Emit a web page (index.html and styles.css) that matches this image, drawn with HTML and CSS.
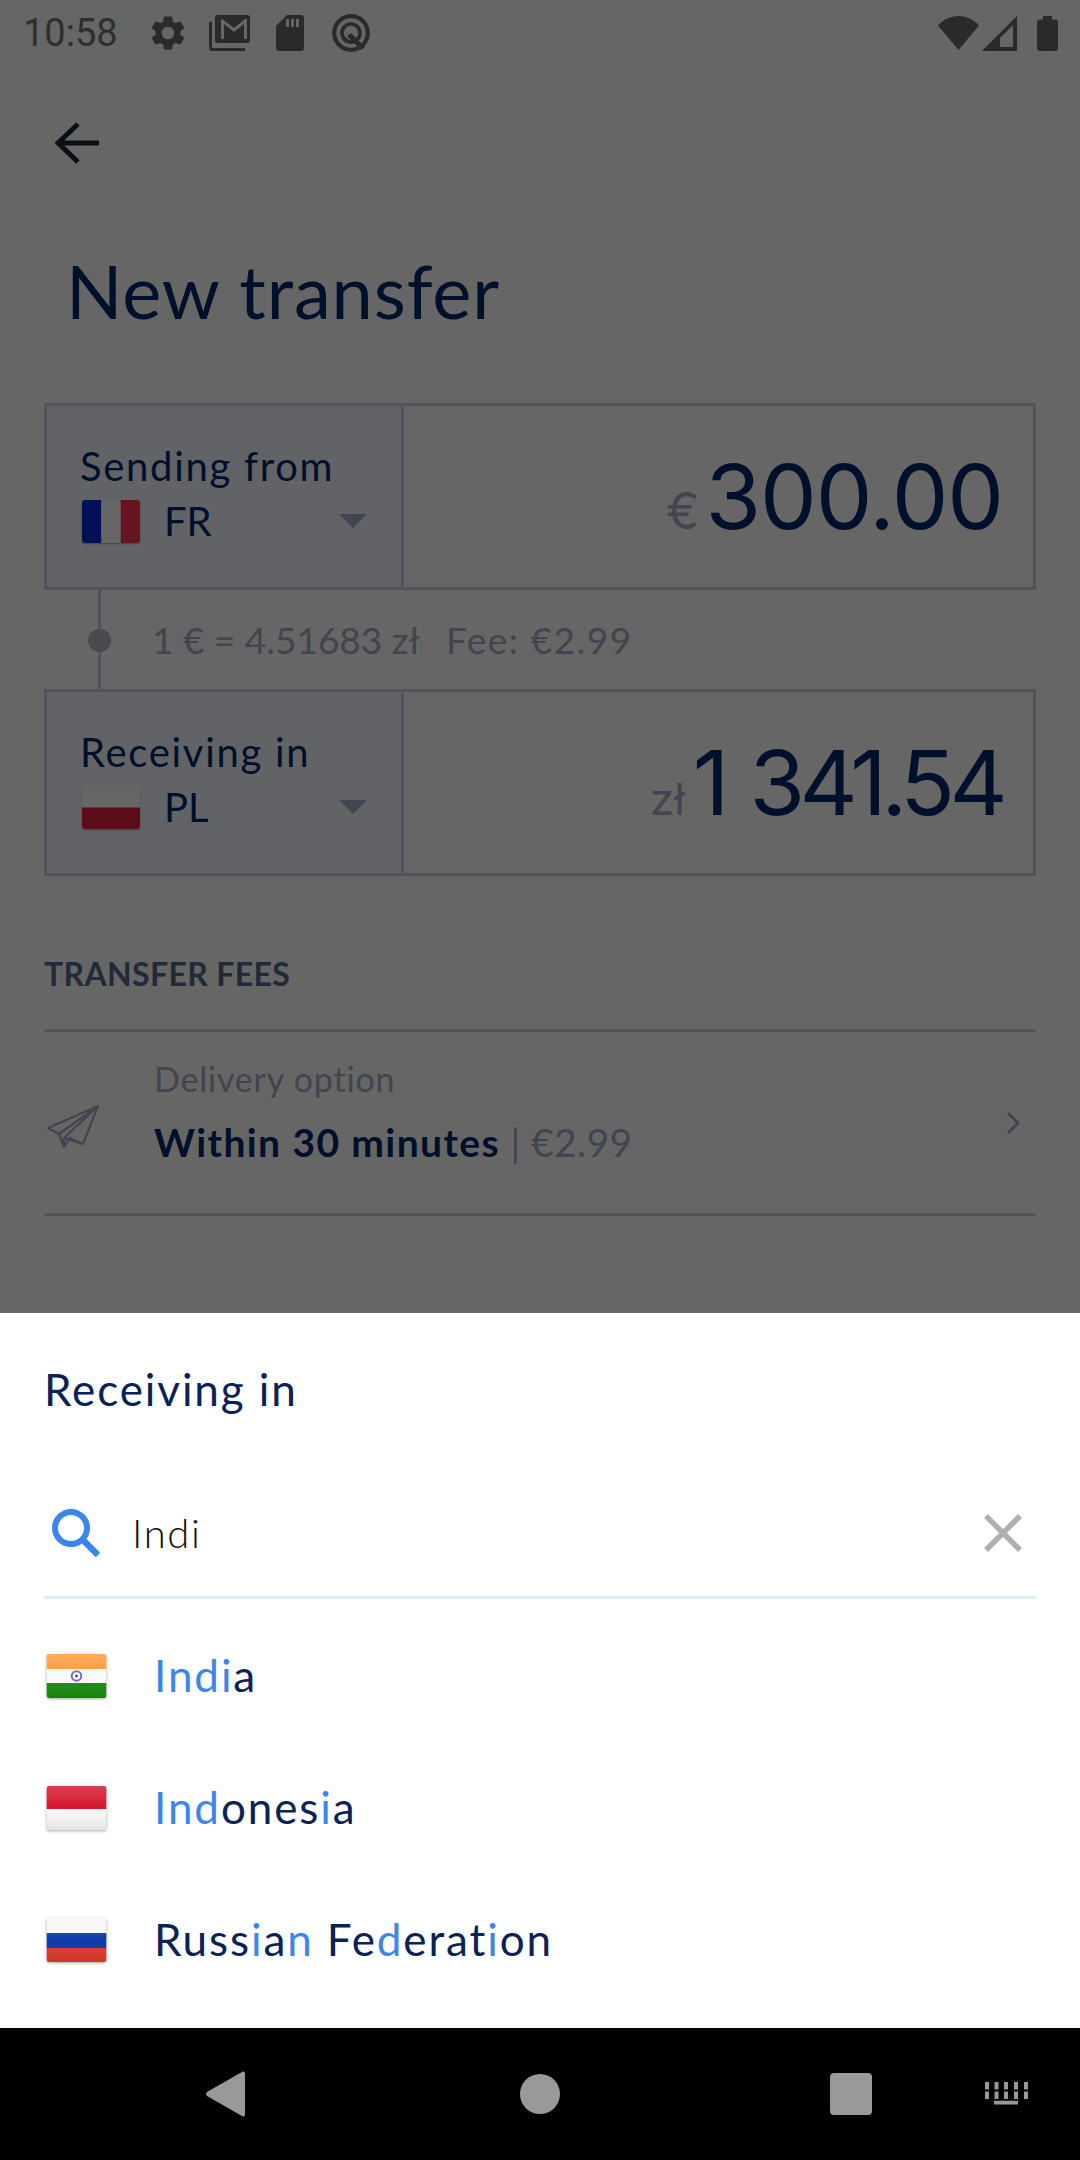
FILE: index.html
```html
<!DOCTYPE html>
<html lang="en">
<head>
    <meta charset="UTF-8">
    <meta name="viewport" content="width=device-width, initial-scale=1.0">
    <title>New transfer</title>
    <link rel="stylesheet" href="styles.css">
</head>
<body>
<div class="screen">
    <div class="page">
        <!-- Status bar -->
        <div class="status">
            <span class="time">10:58</span>
            <svg class="st-gear" viewBox="2.4 1.6 19.2 20.8"><path d="M19.14 12.94c.04-.3.06-.61.06-.94 0-.32-.02-.64-.07-.94l2.03-1.58c.18-.14.23-.41.12-.61l-1.92-3.32c-.12-.22-.37-.29-.59-.22l-2.39.96c-.5-.38-1.03-.7-1.62-.94l-.36-2.54c-.04-.24-.24-.41-.48-.41h-3.84c-.24 0-.43.17-.47.41l-.36 2.54c-.59.24-1.13.57-1.62.94l-2.39-.96c-.22-.08-.47 0-.59.22L2.74 8.87c-.12.21-.08.47.12.61l2.03 1.58c-.05.3-.09.63-.09.94s.02.64.07.94l-2.03 1.58c-.18.14-.23.41-.12.61l1.92 3.32c.12.22.37.29.59.22l2.39-.96c.5.38 1.03.7 1.62.94l.36 2.54c.05.24.24.41.48.41h3.84c.24 0 .44-.17.47-.41l.36-2.54c.59-.24 1.13-.56 1.62-.94l2.39.96c.22.08.47 0 .59-.22l1.92-3.32c.12-.22.07-.47-.12-.61l-2.01-1.58zM12 15.6c-1.98 0-3.6-1.62-3.6-3.6s1.62-3.6 3.6-3.6 3.6 1.62 3.6 3.6-1.62 3.6-3.6 3.6z"/></svg>
            <svg class="st-mail" viewBox="0 0 41 36"><path d="M9 0h29a3 3 0 0 1 3 3v22a3 3 0 0 1-3 3H9a3 3 0 0 1-3-3V3a3 3 0 0 1 3-3zm3 4v20h3V9l10 8 10-8v15h3V4h-2L25 13 13 4z" fill-rule="evenodd"/><path d="M0 7h3v26h33v3H3a3 3 0 0 1-3-3z"/></svg>
            <svg class="st-sd" viewBox="0 0 28 36"><path d="M11 0h14a3 3 0 0 1 3 3v30a3 3 0 0 1-3 3H3a3 3 0 0 1-3-3V11zm4 4v8h3V4zm5 0v8h3V4zM10 4v8h3V4z" fill-rule="evenodd"/></svg>
            <svg class="st-q" viewBox="0 0 38 38"><circle cx="19" cy="19" r="16.8" fill="none" stroke-width="4.2"/><circle cx="19" cy="19" r="9" fill="none" stroke-width="3.6"/><path d="M19 19l14 14-4 3-14-14z"/><path d="M11 21l8 8-8-2z"/></svg>
            <div class="status-right">
                <svg class="st-wifi" viewBox="0 0 41 34"><path d="M0 9.500C5.500 3.500 12.500 0 20.500 0S35.500 3.500 41 9.500L20.500 34z"/></svg>
                <svg class="st-signal" viewBox="0 0 35 35"><path d="M35 0v35H0zM31 9L18 22v9h13z" fill-rule="evenodd"/></svg>
                <svg class="st-battery" viewBox="0 0 21 35"><path d="M6 0h9v3.500h3a3 3 0 0 1 3 3V32a3 3 0 0 1-3 3H3a3 3 0 0 1-3-3V6.500a3 3 0 0 1 3-3h3z"/></svg>
            </div>
        </div>

        <div class="toolbar">
            <svg class="back" viewBox="0 0 44 42"><path d="M44 21H4M23 2L3 21l20 19" fill="none" stroke-width="5"/></svg>
        </div>

        <h1 class="title">New transfer</h1>

        <!-- Sending box -->
        <div class="box">
            <div class="picker">
                <div class="picker-label">Sending from</div>
                <div class="picker-value">
                    <svg class="flag-sm" viewBox="0 0 58 43"><rect width="19.300" height="43" fill="#0a2ad8"/><rect x="19.300" width="19.400" height="43" fill="#fff"/><rect x="38.700" width="19.300" height="43" fill="#ff3550"/></svg>
                    <span>FR</span>
                    <i class="caret"></i>
                </div>
            </div>
            <div class="amount"><span class="cur cur-eur">€</span><span class="num">300.00</span></div>
        </div>

        <div class="rate">
            <span class="rate-line"></span>
            <span class="rate-dot"></span>
            <span class="rate-text">1 € = 4.51683 zł</span>
            <span class="rate-text rate-fee">Fee: €2.99</span>
        </div>

        <!-- Receiving box -->
        <div class="box">
            <div class="picker">
                <div class="picker-label">Receiving in</div>
                <div class="picker-value">
                    <svg class="flag-sm" viewBox="0 0 58 43"><rect width="58" height="21.500" fill="#fff"/><rect y="21.500" width="58" height="21.500" fill="#e8223f"/></svg>
                    <span>PL</span>
                    <i class="caret"></i>
                </div>
            </div>
            <div class="amount amount-pln"><span class="cur">zł</span><span class="num num-tight">1 341.54</span></div>
        </div>

        <div class="section-title">TRANSFER FEES</div>
        <div class="delivery">
            <svg class="plane" viewBox="0 0 52 43"><path d="M51 1L1 23l11 6 5 13 6-9 13 6zM51 1L12 29M51 1L17 33v9M17 33l19 6" fill="none" stroke-width="2.200" stroke-linejoin="round"/></svg>
            <div class="delivery-text">
                <div class="delivery-label">Delivery option</div>
                <div class="delivery-value"><b>Within 30 minutes</b> <span>| €2.99</span></div>
            </div>
            <svg class="chevron" viewBox="0 0 14 24"><path d="M2 2l10 10L2 22" fill="none" stroke-width="3"/></svg>
        </div>
    </div>

    <div class="scrim"></div>

    <!-- Bottom sheet -->
    <div class="sheet">
        <div class="sheet-title">Receiving in</div>
        <div class="search">
            <svg class="search-icon" viewBox="0 0 48 48"><circle cx="19" cy="19" r="16" fill="none" stroke-width="6"/><path d="M30 30l16 16" fill="none" stroke-width="6.500"/></svg>
            <span class="search-text">Indi</span>
            <svg class="clear" viewBox="0 0 38 38"><path d="M2 2l34 34M36 2L2 36" fill="none" stroke-width="5.500"/></svg>
        </div>
        <div class="row">
            <svg class="flag" viewBox="0 0 60 44">
                <defs>
                    <clipPath id="fc1"><rect width="60" height="44" rx="3"/></clipPath>
                    <linearGradient id="gloss" x1="0" y1="0" x2="0" y2="1">
                        <stop offset="0" stop-color="#fff" stop-opacity=".18"/>
                        <stop offset=".5" stop-color="#fff" stop-opacity="0"/>
                        <stop offset="1" stop-color="#000" stop-opacity=".08"/>
                    </linearGradient>
                </defs>
                <g clip-path="url(#fc1)">
                    <rect width="60" height="15" fill="#ff9a3c"/><rect y="15" width="60" height="15" fill="#fafafa"/><rect y="29" width="60" height="15" fill="#1a8c0e"/>
                    <circle cx="30" cy="22" r="4.800" fill="none" stroke="#6f6fb5" stroke-width="2"/><circle cx="30" cy="22" r="1.400" fill="#4b4ba0"/>
                    <rect width="60" height="44" fill="url(#gloss)"/>
                </g>
            </svg>
            <span class="name"><em>Indi</em>a</span>
        </div>
        <div class="row">
            <svg class="flag" viewBox="0 0 60 44">
                <defs><clipPath id="fc2"><rect width="60" height="44" rx="3"/></clipPath></defs>
                <g clip-path="url(#fc2)"><rect width="60" height="23" fill="#d4162e"/><rect y="23" width="60" height="21" fill="#f7f7f8"/><rect width="60" height="44" fill="url(#gloss)"/></g>
            </svg>
            <span class="name"><em>Ind</em>ones<em>i</em>a</span>
        </div>
        <div class="row">
            <svg class="flag" viewBox="0 0 60 44">
                <defs><clipPath id="fc3"><rect width="60" height="44" rx="3"/></clipPath></defs>
                <g clip-path="url(#fc3)"><rect width="60" height="15" fill="#f7f7f8"/><rect y="15" width="60" height="15" fill="#0d3ba8"/><rect y="30" width="60" height="14" fill="#db3b2b"/><rect width="60" height="44" fill="url(#gloss)"/></g>
            </svg>
            <span class="name">Russ<em>i</em>a<em>n</em> Fe<em>d</em>erat<em>i</em>on</span>
        </div>
    </div>

    <!-- Navigation bar -->
    <div class="nav">
        <svg class="nav-back" viewBox="0 0 39 46"><path d="M36 1c2-1 3 0 3 2v40c0 2-1 3-3 2L1 25c-1.300-1-1.300-3 0-4z"/></svg>
        <i class="nav-home"></i>
        <i class="nav-recent"></i>
        <svg class="nav-keys" viewBox="0 0 43 24"><path d="M0 0h4v8H0zM9.500 0h4v8h-4zM19 0h4v8h-4zM29 0h4v8h-4zM39 0h4v8h-4zM0 10h4v8H0zM9.500 10h4v8h-4zM19 10h4v8h-4zM29 10h4v8h-4zM39 10h4v8h-4zM9 20h24v4H9z" transform="scale(1 .94)"/></svg>
    </div>
</div>
</body>
</html>
```

FILE: styles.css
```css
* {
    box-sizing: border-box;
}

body {
    margin: 0;
    font-family: Lato, "Noto Sans", sans-serif;
    color: #0a2257;
}

.screen {
    position: relative;
    width: 1080px;
    height: 2160px;
    display: flex;
    flex-direction: column;
    overflow: hidden;
}

.page {
    flex: 1;
    background: #fff;
}

.scrim {
    position: absolute;
    top: 0;
    left: 0;
    right: 0;
    bottom: 132px;
    background: rgba(0, 0, 0, .6);
}

/* status bar */
.status {
    height: 66px;
    display: flex;
    align-items: center;
    padding-left: 23px;
    padding-right: 22px;
    color: #6a6a6a;
    fill: #6a6a6a;
    stroke: #6a6a6a;
}

.status svg {
    stroke: none;
    display: block;
}

.time {
    font-family: Roboto, sans-serif;
    font-size: 38px;
    width: 128px;
    color: #747474;
}

.st-gear { width: 34px; height: 36px; }
.st-mail { width: 41px; height: 36px; margin-left: 24px; }
.st-sd { width: 28px; height: 36px; margin-left: 26px; }

.status svg.st-q {
    width: 38px;
    height: 38px;
    margin-left: 28px;
    stroke: #6a6a6a;
}

.st-q path {
    stroke: none;
}

.status-right {
    margin-left: auto;
    display: flex;
    align-items: flex-start;
    padding-top: 0;
}

.st-wifi { width: 41px; height: 34px; }
.st-signal { width: 35px; height: 35px; margin-left: 3px; }
.st-battery { width: 21px; height: 35px; margin-left: 20px; }

/* header */
.toolbar {
    height: 154px;
    padding-left: 55px;
    display: flex;
    align-items: center;
}

.back {
    width: 44px;
    height: 42px;
    stroke: #18233a;
}

.title {
    margin: 0;
    height: 183px;
    padding: 26px 0 0 66px;
    font-size: 74px;
    line-height: 90px;
    font-weight: 400;
    letter-spacing: .9px;
    color: #00286a;
}

/* amount boxes */
.box {
    margin: 0 44px;
    height: 187px;
    display: flex;
    border: 3px solid #cfd2e1;
}

.picker {
    width: 357px;
    padding: 36px 0 0 33px;
    background: #f5f8ff;
    border-right: 3px solid #cfd2e1;
}

.picker-label {
    font-size: 40px;
    line-height: 48px;
    letter-spacing: 1.7px;
    color: #00286a;
}

.picker-value {
    display: flex;
    align-items: center;
    height: 54px;
    margin-top: 4px;
    font-size: 40px;
    color: #00286a;
}

.flag-sm {
    width: 58px;
    height: 43px;
    margin: 0 24px 0 2px;
    border-radius: 3px;
    box-shadow: 0 1px 2px rgba(0, 0, 0, .35);
}

.caret {
    margin-left: auto;
    margin-right: 34px;
    width: 0;
    height: 0;
    border-left: 14px solid transparent;
    border-right: 14px solid transparent;
    border-top: 14px solid #a5aac5;
}

.amount {
    flex: 1;
    display: flex;
    justify-content: flex-end;
    align-items: baseline;
    padding: 35px 30px 0 0;
    font-family: Inter, sans-serif;
    color: #00286a;
}

.amount-pln {
    padding-right: 31px;
}

.cur {
    font-size: 44px;
    margin-right: 8px;
    color: #a5aac5;
}

.cur-eur {
    font-size: 50px;
    margin-right: 6px;
}

.num {
    font-size: 90px;
    font-weight: 380;
    line-height: 112px;
    letter-spacing: -1.1px;
}

/* the 1s need pulling in, Inter sets them wider than the original */
.num-tight {
    letter-spacing: -5.6px;
    word-spacing: 6px;
}

.rate {
    position: relative;
    height: 99px;
    margin-left: 44px;
    padding-left: 108px;
    display: flex;
    align-items: center;
    gap: 26px;
    font-size: 37px;
    color: #a5aac5;
}

.rate-fee {
    letter-spacing: 1.5px;
}

.rate-line {
    position: absolute;
    left: 54px;
    top: 0;
    bottom: 0;
    width: 3px;
    background: #cfd2e1;
}

.rate-dot {
    position: absolute;
    left: 44px;
    top: 39px;
    width: 23px;
    height: 23px;
    border-radius: 50%;
    background: #b5b8c9;
}

/* delivery */
.section-title {
    height: 156px;
    margin: 0 44px;
    padding-top: 78px;
    border-bottom: 3px solid #cfd2e1;
    font-size: 32px;
    line-height: 40px;
    font-weight: 700;
    letter-spacing: .35px;
    color: #556690;
}

.delivery {
    height: 184px;
    margin: 0 44px;
    display: flex;
    align-items: center;
    border-bottom: 3px solid #cfd2e1;
}

.plane {
    width: 52px;
    height: 43px;
    margin: 8px 0 0 3px;
    stroke: #a5aac5;
}

.delivery-text {
    margin-left: 55px;
    padding-bottom: 23px;
    flex: 1;
}

.delivery-label {
    font-size: 34px;
    line-height: 44px;
    letter-spacing: .8px;
    color: #a5aac5;
}

.delivery-value {
    margin-top: 18px;
    font-size: 39px;
    line-height: 46px;
    letter-spacing: .4px;
    color: #a5aac5;
}

.delivery-value b {
    font-weight: 700;
    letter-spacing: 1.4px;
    color: #00286a;
}

.chevron {
    width: 14px;
    height: 24px;
    margin-right: 16px;
    stroke: #a5aac5;
}

/* bottom sheet */
.sheet {
    position: absolute;
    left: 0;
    right: 0;
    bottom: 132px;
    height: 715px;
    background: #fff;
    display: flex;
    flex-direction: column;
}

.sheet-title {
    height: 156px;
    padding: 49px 0 0 44px;
    font-size: 44px;
    line-height: 54px;
    letter-spacing: 1.9px;
}

.search {
    height: 130px;
    margin: 0 44px;
    padding: 0 14px 0 8px;
    display: flex;
    align-items: center;
    border-bottom: 3px solid #dfedf4;
}

.search-icon {
    width: 48px;
    height: 48px;
    stroke: #3b86ee;
}

.search-text {
    margin-left: 32px;
    font-size: 40px;
    font-weight: 300;
    letter-spacing: 1.6px;
    color: #111;
}

.clear {
    margin-left: auto;
    width: 38px;
    height: 38px;
    stroke: #b0b0b0;
}

.row {
    height: 132px;
    flex: none;
    padding: 20px 0 0 46px;
    display: flex;
    align-items: center;
}

.flag {
    width: 61px;
    height: 44px;
    margin-top: 1px;
    filter: drop-shadow(0 1px 1.500px rgba(0, 0, 0, .35));
}

.name {
    margin-left: 47px;
    font-size: 44px;
    letter-spacing: 1.9px;
}

.name em {
    font-style: normal;
    color: #3b86ee;
}

/* navigation bar */
.nav {
    height: 132px;
    background: #000;
    display: flex;
    align-items: center;
    padding-left: 206px;
}

.nav-back {
    width: 39px;
    height: 46px;
    fill: #999;
}

.nav-home {
    width: 40px;
    height: 40px;
    margin-left: 275px;
    border-radius: 50%;
    background: #999;
}

.nav-recent {
    width: 42px;
    height: 42px;
    margin-left: 270px;
    border-radius: 4px;
    background: #999;
}

.nav-keys {
    width: 43px;
    height: 24px;
    margin-left: 113px;
    fill: #999;
}
```
